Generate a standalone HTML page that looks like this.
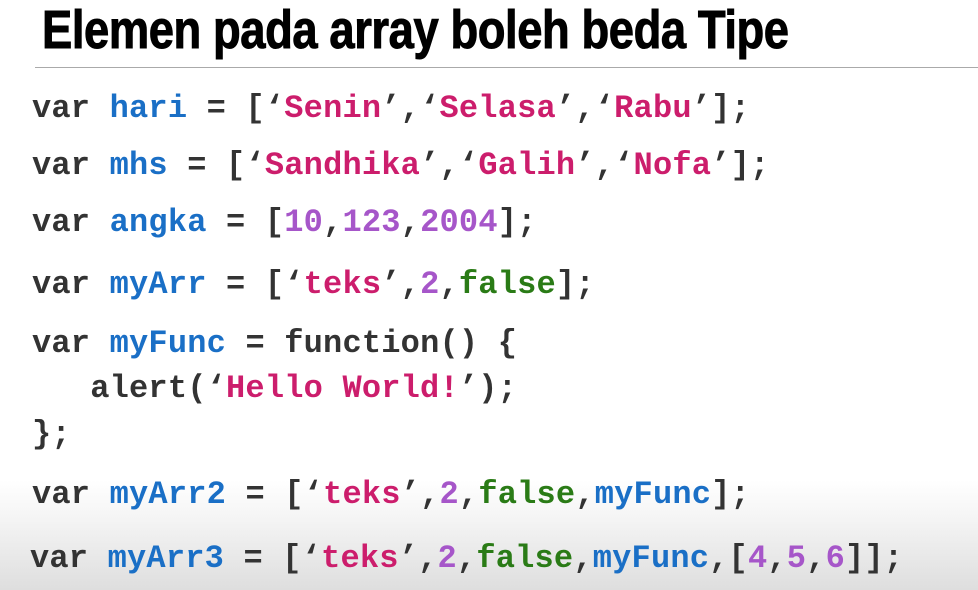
<!DOCTYPE html>
<html><head><meta charset="utf-8"><style>
body{margin:0;width:978px;height:590px;overflow:hidden;position:relative;
background:linear-gradient(to bottom,#fff 0,#fff 480px,#f4f4f4 520px,#dedede 590px);}
.t{position:absolute;left:42px;top:-1px;font-family:"Liberation Sans",sans-serif;font-weight:bold;font-size:54px;color:#000;transform:scaleX(0.84);transform-origin:0 0;white-space:nowrap;letter-spacing:-0.5px;-webkit-text-stroke:1px #000}
.hr{position:absolute;left:35px;top:67px;width:943px;height:1px;background:#aaa}
.l{position:absolute;left:32px;font-family:"Liberation Mono",monospace;font-weight:bold;font-size:32px;line-height:36px;color:#333;white-space:pre;letter-spacing:0.2px}
.b{color:#1a6fc6}.s{color:#cc1d6c}.n{color:#a656c9}.g{color:#2a7b16}
</style></head><body>
<div class="t">Elemen pada array boleh beda Tipe</div>
<div class="hr"></div>
<div class="l" style="top:91px">var <span class="b">hari</span> = [‘<span class="s">Senin</span>’,‘<span class="s">Selasa</span>’,‘<span class="s">Rabu</span>’];</div>
<div class="l" style="top:148px">var <span class="b">mhs</span> = [‘<span class="s">Sandhika</span>’,‘<span class="s">Galih</span>’,‘<span class="s">Nofa</span>’];</div>
<div class="l" style="top:205px">var <span class="b">angka</span> = [<span class="n">10</span>,<span class="n">123</span>,<span class="n">2004</span>];</div>
<div class="l" style="top:267px">var <span class="b">myArr</span> = [‘<span class="s">teks</span>’,<span class="n">2</span>,<span class="g">false</span>];</div>
<div class="l" style="top:326px">var <span class="b">myFunc</span> = function() {</div>
<div class="l" style="top:371px">   alert(‘<span class="s">Hello World!</span>’);</div>
<div class="l" style="top:417px">};</div>
<div class="l" style="top:477px">var <span class="b">myArr2</span> = [‘<span class="s">teks</span>’,<span class="n">2</span>,<span class="g">false</span>,<span class="b">myFunc</span>];</div>
<div class="l" style="top:541px;left:30px">var <span class="b">myArr3</span> = [‘<span class="s">teks</span>’,<span class="n">2</span>,<span class="g">false</span>,<span class="b">myFunc</span>,[<span class="n">4</span>,<span class="n">5</span>,<span class="n">6</span>]];</div>
</body></html>
